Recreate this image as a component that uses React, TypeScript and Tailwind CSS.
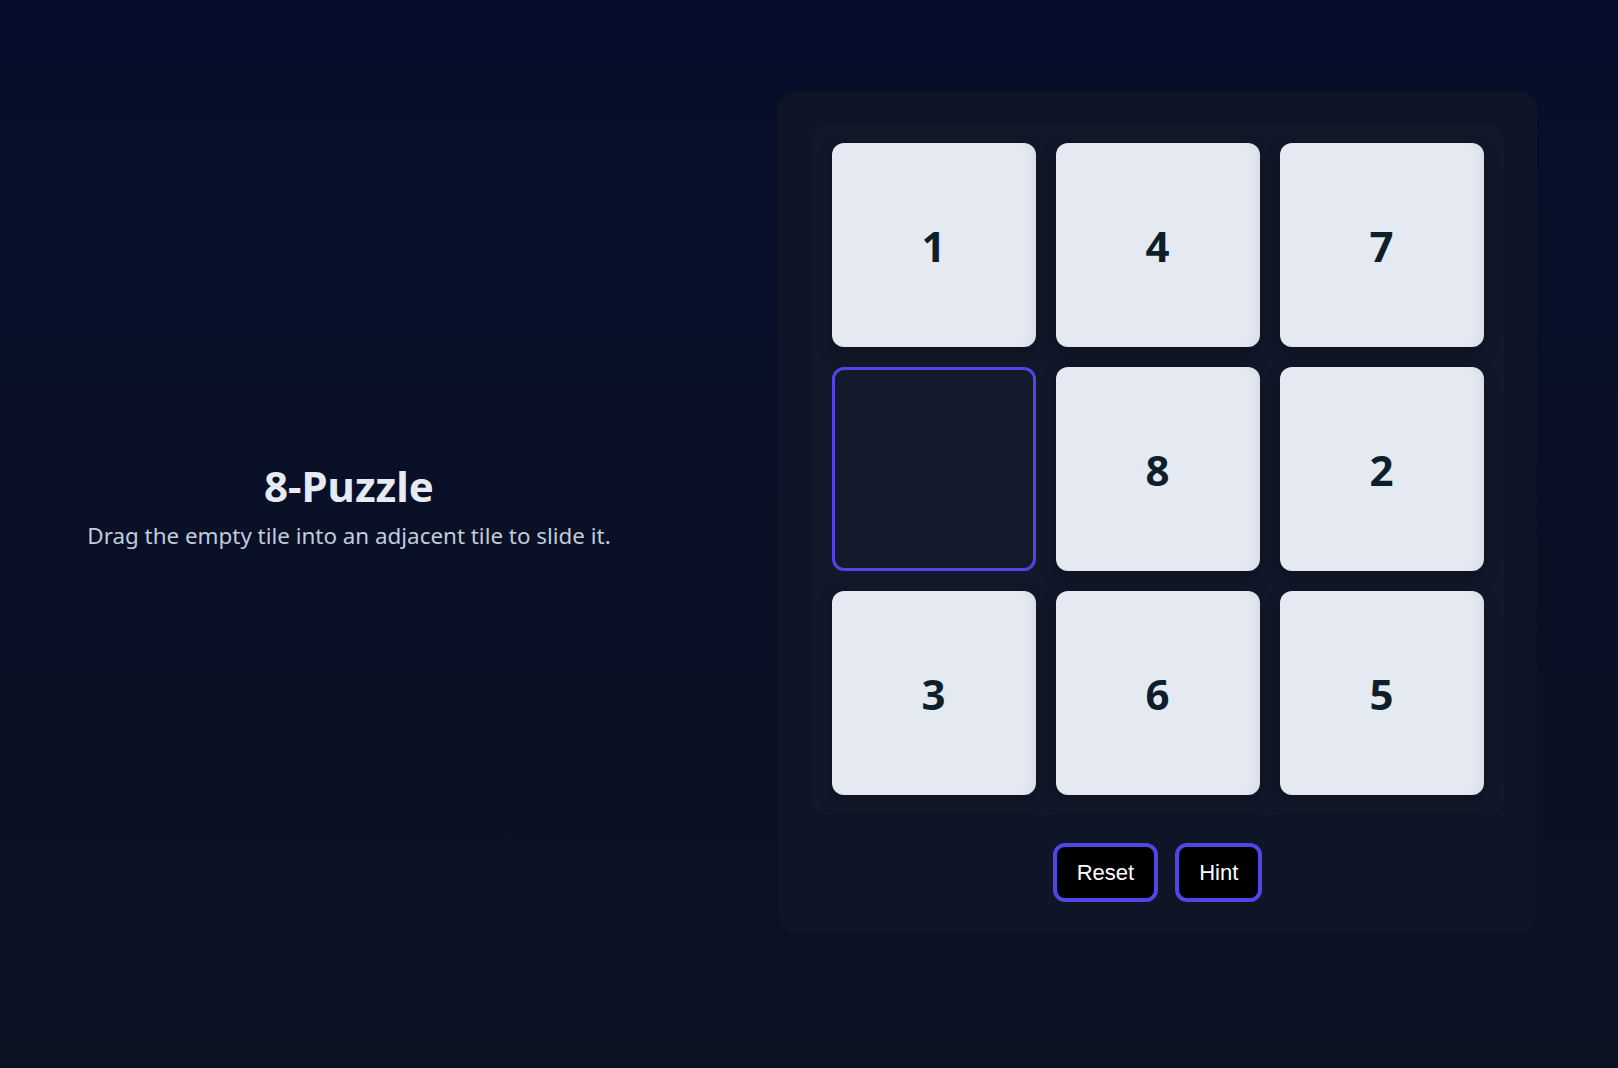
import React from "react";

const tiles: (number | null)[] = [1, 4, 7, null, 8, 2, 3, 6, 5];

export default function App() {
  return (
    <div className="w-full h-[1068px] bg-gradient-to-b from-[#070e2b] to-[#0b1222] flex items-start pt-[91px]">
      <div className="w-[698px] h-[844px] pb-[14px] flex flex-col items-center justify-center text-center" style={{ fontFamily: '"Noto Sans", "Open Sans", sans-serif' }}>
        <h1 className="text-[42px] font-bold leading-[50px] text-[#e6ebf3]">8-Puzzle</h1>
        <p className="mt-[10px] text-[22.4px] leading-[30px] text-[#c3ccd9]">Drag the empty tile into an adjacent tile to slide it.</p>
      </div>
      <div className="ml-[80px] w-[759px] rounded-[20px] bg-[#0e1526] p-8 flex flex-col items-center">
        <div className="w-[692px] rounded-[16px] bg-[#111829] p-5 grid grid-cols-3 gap-5">
          {tiles.map((t, i) =>
            t === null ? (
              <div key={i} className="w-[204px] h-[204px] rounded-xl border-[3px] border-[#4f46e5] bg-[#141a2c]" />
            ) : (
              <div
                key={i}
                className="w-[204px] h-[204px] rounded-xl bg-[#e5e9f2] flex items-center justify-center shadow-[inset_-10px_0_14px_-8px_rgba(0,0,0,0.07),0_6px_16px_rgba(0,0,0,0.25)]"
              >
                <span className="text-[42px] font-bold text-[#0d1f2b]" style={{ fontFamily: '"Noto Sans", "Open Sans", sans-serif' }}>
                  {t}
                </span>
              </div>
            )
          )}
        </div>
        <div className="mt-[28px] flex gap-[17px]" style={{ fontFamily: '"Liberation Sans", Arial, sans-serif' }}>
          <button className="h-[59px] px-5 rounded-xl border-4 border-[#4f46e5] bg-black text-white text-[22px]">Reset</button>
          <button className="h-[59px] px-5 rounded-xl border-4 border-[#4f46e5] bg-black text-white text-[22px]">Hint</button>
        </div>
      </div>
    </div>
  );
}
